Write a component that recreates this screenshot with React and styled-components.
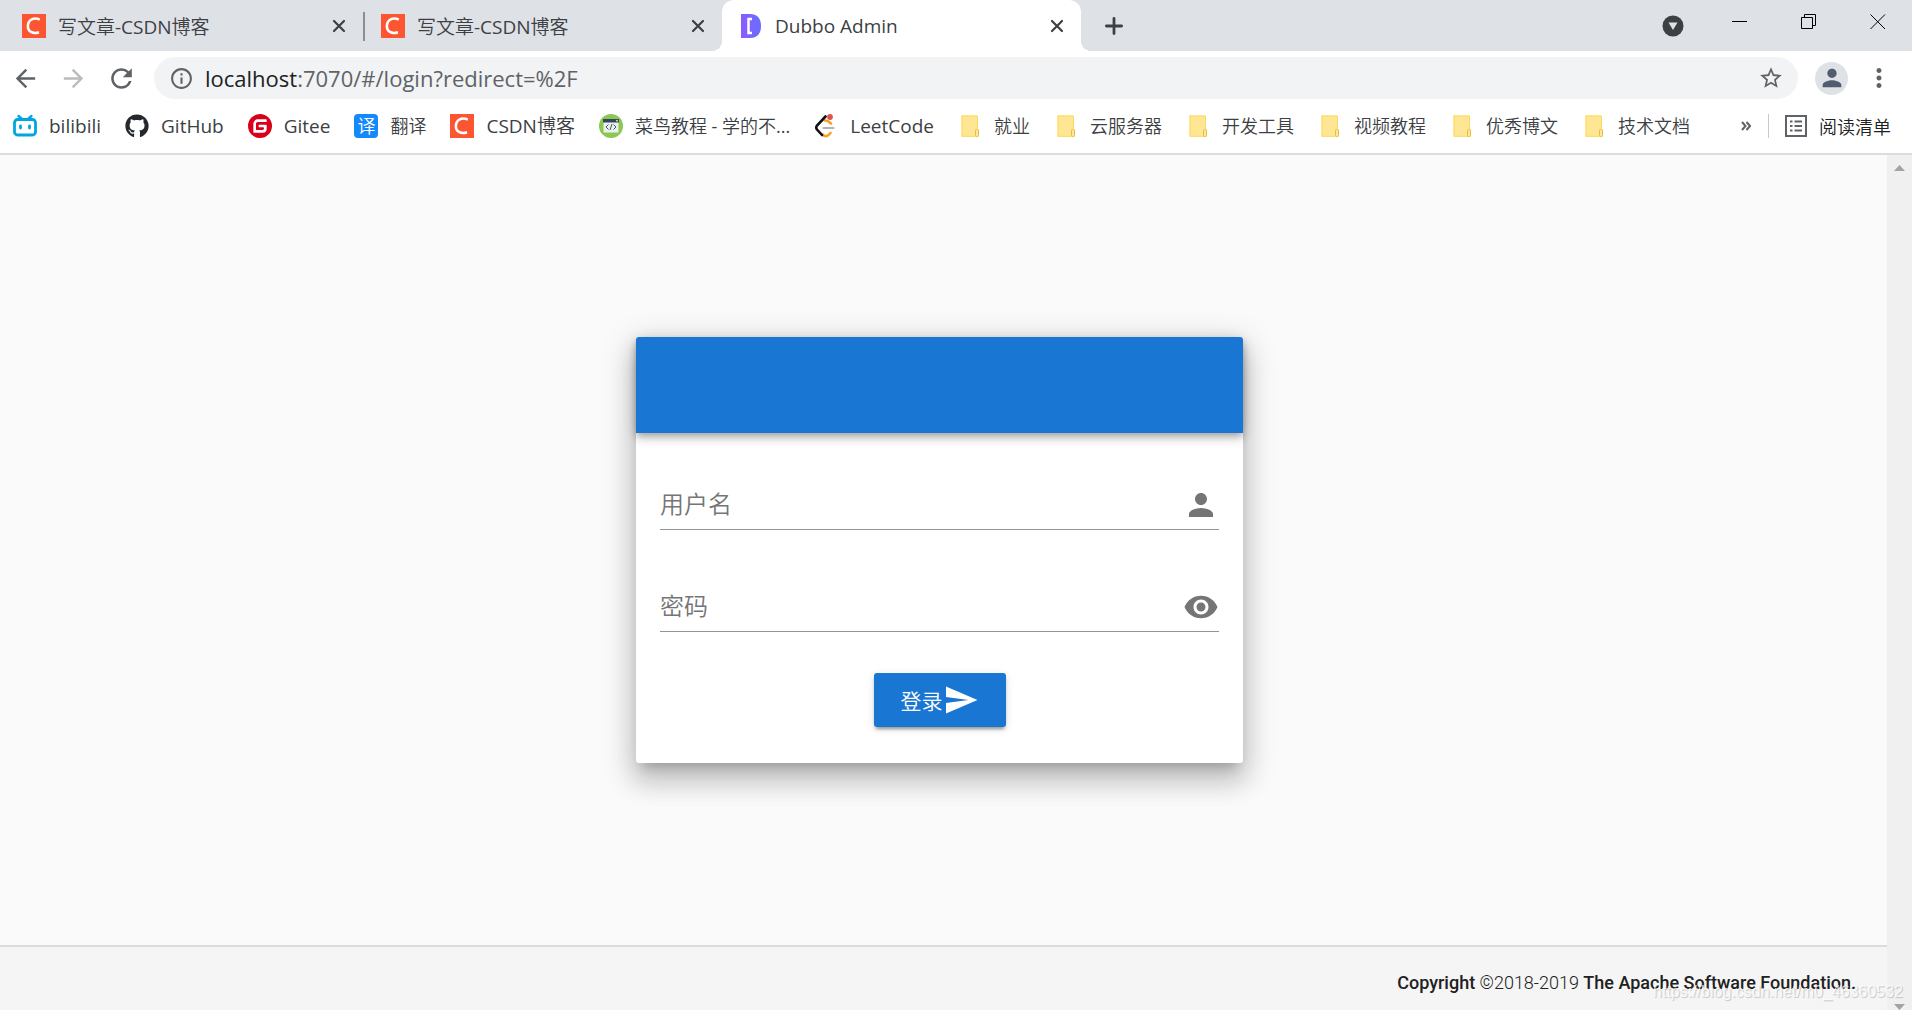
import React, { useState } from 'react';
import styled, { createGlobalStyle, css } from 'styled-components';
import {
  MdArrowBack,
  MdArrowForward,
  MdRefresh,
  MdInfoOutline,
  MdStarBorder,
  MdPerson,
  MdMoreVert,
  MdRemoveRedEye,
  MdSend,
} from 'react-icons/md';
import { FaGithub } from 'react-icons/fa';
import { SiGitee } from 'react-icons/si';

const CsdnIcon = () => (
  <svg width="24" height="24" viewBox="0 0 24 24" aria-hidden="true">
    <rect width="24" height="24" fill="#fc5531" />
    <path
      d="M17.8 5.6C12 3 6.2 5.6 5.9 11.6C5.6 17.6 10.6 20.4 17 18.2"
      fill="none"
      stroke="#fff"
      strokeWidth="2.6"
    />
  </svg>
);

const DubboIcon = () => (
  <svg width="20" height="24" viewBox="0 0 20 24" aria-hidden="true">
    <defs>
      <linearGradient id="dubbo" x1="0" y1="0" x2="1" y2="0">
        <stop offset="0" stopColor="#8a5cff" />
        <stop offset="1" stopColor="#6a6cff" />
      </linearGradient>
    </defs>
    <path d="M0 0H9C16 0 20 4 20 12S16 24 9 24H0Z" fill="url(#dubbo)" />
    <path d="M11 5H7.5V19H11" fill="none" stroke="#fff" strokeWidth="2.5" />
  </svg>
);

const BilibiliIcon = () => (
  <svg width="24" height="24" viewBox="0 0 24 24" aria-hidden="true">
    <g fill="none" stroke="#00a7de" strokeWidth="2.8" strokeLinecap="round">
      <rect x="1.5" y="5.5" width="21" height="15.5" rx="3" />
      <path d="M5.5 2L9 5M18.5 2L15 5" strokeWidth="2.4" />
      <path d="M7.5 12V14M16.5 12V14" />
    </g>
  </svg>
);

const RunoobIcon = () => (
  <svg width="24" height="24" viewBox="0 0 24 24" aria-hidden="true">
    <circle cx="12" cy="12" r="12" fill="#8cc751" />
    <rect x="4.5" y="5" width="15" height="13.5" fill="#eceff0" />
    <rect x="4" y="5" width="16" height="3.5" fill="#32485a" />
    <circle cx="18" cy="6.7" r="0.9" fill="#e8e8e8" />
    <path
      d="M9.5 10.5L7 13L9.5 15.5M14.5 10.5L17 13L14.5 15.5M13 10L11 16"
      fill="none"
      stroke="#40586b"
      strokeWidth="1"
    />
  </svg>
);

const LeetCodeIcon = () => (
  <svg width="24" height="24" viewBox="0 0 24 24" aria-hidden="true">
    <g fill="none" strokeWidth="2.6" strokeLinecap="round">
      <path d="M11 6.5Q14 6.4 17 9.5" stroke="#f8a126" />
      <path d="M8.5 20.5Q12.5 24.5 16.5 19" stroke="#f8a126" />
      <path d="M11.5 2.5L3 11.5Q1.5 13.5 3 15.5L8 21" stroke="#111" />
      <path d="M9.5 14H19.5" stroke="#b4b4b4" strokeWidth="2.2" />
    </g>
    <circle cx="16" cy="3" r="2.9" fill="#d9534f" />
  </svg>
);

const FolderIcon = () => (
  <svg width="24" height="24" viewBox="0 0 24 24" aria-hidden="true">
    <path d="M3.5 1.5H19.5V15.5H21V22.5H3.5Z" fill="#ffe694" />
    <path d="M3.5 2H19.5V15M4 1.5V22M3.5 22.3H19" fill="none" stroke="#fadb5e" />
    <rect x="17.5" y="15.5" width="3" height="7" rx="1" fill="#ffe694" stroke="#e8bd3f" />
  </svg>
);

const ListIcon = () => (
  <svg width="22" height="22" viewBox="0 0 22 22" aria-hidden="true">
    <rect x="1" y="1" width="20" height="20" fill="none" stroke="#5f6368" strokeWidth="2" />
    <path
      d="M5 6.5H7.5M5 11H7.5M5 15.5H7.5M9.5 6.5H17M9.5 11H17M9.5 15.5H17"
      stroke="#5f6368"
      strokeWidth="2"
    />
  </svg>
);

const CloseIcon = () => (
  <svg width="14" height="14" viewBox="0 0 14 14" aria-hidden="true">
    <path d="M2 2L12 12M12 2L2 12" stroke="#3c4043" strokeWidth="2.2" strokeLinecap="round" />
  </svg>
);

const TranslateIcon = styled.span`
  display: block;
  flex-shrink: 0;
  width: 24px;
  height: 24px;
  border-radius: 4px;
  background: #1389fd;
  color: #fff;
  font-size: 18px;
  line-height: 24px;
  text-align: center;
`;

const tabs = [
  { id: 1, title: '写文章-CSDN博客', icon: <CsdnIcon /> },
  { id: 2, title: '写文章-CSDN博客', icon: <CsdnIcon /> },
  { id: 3, title: 'Dubbo Admin', icon: <DubboIcon />, active: true },
];

const bookmarks = [
  { title: 'bilibili', icon: <BilibiliIcon />, latin: true },
  { title: 'GitHub', icon: <FaGithub size={24} color="#24292f" />, latin: true },
  { title: 'Gitee', icon: <SiGitee size={24} color="#d9001b" />, latin: true },
  { title: '翻译', icon: <TranslateIcon>译</TranslateIcon> },
  { title: 'CSDN博客', icon: <CsdnIcon />, latin: true },
  { title: '菜鸟教程 - 学的不...', icon: <RunoobIcon /> },
  { title: 'LeetCode', icon: <LeetCodeIcon />, latin: true },
  { title: '就业', icon: <FolderIcon /> },
  { title: '云服务器', icon: <FolderIcon /> },
  { title: '开发工具', icon: <FolderIcon /> },
  { title: '视频教程', icon: <FolderIcon /> },
  { title: '优秀博文', icon: <FolderIcon /> },
  { title: '技术文档', icon: <FolderIcon /> },
];

const App = () => {
  const [user, setUser] = useState('');
  const [password, setPassword] = useState('');
  const [visible, setVisible] = useState(false);

  return (
    <Screen>
      <GlobalStyle />
      <TabStrip>
        {tabs.map((tab) => (
          <Tab key={tab.id} $active={tab.active} $divider={tab.id === 1}>
            {tab.icon}
            <TabTitle>{tab.title}</TabTitle>
            <TabButton type="button" aria-label="关闭标签页">
              <CloseIcon />
            </TabButton>
          </Tab>
        ))}
        <NewTab type="button" aria-label="新标签页">
          <svg width="18" height="18" viewBox="0 0 18 18" aria-hidden="true">
            <path d="M9 1.4V16.6M1.4 9H16.6" stroke="#3c4043" strokeWidth="2.8" strokeLinecap="round" />
          </svg>
        </NewTab>
        <TabSearch type="button" aria-label="搜索标签页">
          <svg width="22" height="22" viewBox="0 0 22 22" aria-hidden="true">
            <circle cx="11" cy="11" r="10.5" fill="#3c4043" />
            <path d="M6.5 7.5H15.5L11 15Z" fill="#dee1e6" />
          </svg>
        </TabSearch>
        <WindowButtons>
          <WindowButton type="button" aria-label="最小化">
            <svg width="16" height="16" viewBox="0 0 16 16" aria-hidden="true">
              <path d="M0 7.5H15" stroke="#000" />
            </svg>
          </WindowButton>
          <WindowButton type="button" aria-label="还原">
            <svg width="16" height="16" viewBox="0 0 16 16" aria-hidden="true">
              <path d="M0.5 3.5H11.5V14.5H0.5ZM3.5 3V0.5H14.5V11.5H12" fill="none" stroke="#000" />
            </svg>
          </WindowButton>
          <WindowButton type="button" aria-label="关闭">
            <svg width="16" height="16" viewBox="0 0 16 16" aria-hidden="true">
              <path d="M0.5 0.5L15 15M15 0.5L0.5 15" stroke="#000" />
            </svg>
          </WindowButton>
        </WindowButtons>
      </TabStrip>

      <Toolbar>
        <NavButton type="button" aria-label="后退">
          <MdArrowBack size={29} />
        </NavButton>
        <NavButton type="button" aria-label="前进" disabled>
          <MdArrowForward size={29} />
        </NavButton>
        <NavButton type="button" aria-label="重新加载">
          <MdRefresh size={31} />
        </NavButton>
        <AddressBar>
          <MdInfoOutline size={25} />
          <Url href="#/login?redirect=%2F">
            <Host>localhost</Host>:7070/#/login?redirect=%2F
          </Url>
          <BarButton type="button" aria-label="为此标签页添加书签">
            <MdStarBorder size={26} />
          </BarButton>
        </AddressBar>
        <Avatar type="button" aria-label="个人资料">
          <MdPerson size={28} />
        </Avatar>
        <BarButton type="button" aria-label="自定义及控制">
          <MdMoreVert size={30} />
        </BarButton>
      </Toolbar>

      <BookmarkBar>
        <Bookmarks>
          {bookmarks.map((item) => (
            <Bookmark key={item.title} href="#" $latin={item.latin}>
              {item.icon}
              <span>{item.title}</span>
            </Bookmark>
          ))}
        </Bookmarks>
        <More type="button" aria-label="更多书签">
          <svg width="10" height="10" viewBox="0 0 10 10" aria-hidden="true">
            <path d="M1 1L4.5 5L1 9M5.5 1L9 5L5.5 9" fill="none" stroke="#5f6368" strokeWidth="2" />
          </svg>
        </More>
        <ReadingList type="button">
          <ListIcon />
          阅读清单
        </ReadingList>
      </BookmarkBar>

      <Viewport>
        <Page>
          <Main>
            <Card>
              <CardHead />
              <Form onSubmit={(e) => e.preventDefault()}>
                <Field>
                  <Input
                    id="user"
                    type="text"
                    placeholder="用户名"
                    aria-label="用户名"
                    value={user}
                    onChange={(e) => setUser(e.target.value)}
                  />
                  <MdPerson size={36} />
                </Field>
                <Field>
                  <Input
                    id="password"
                    type={visible ? 'text' : 'password'}
                    placeholder="密码"
                    aria-label="密码"
                    value={password}
                    onChange={(e) => setPassword(e.target.value)}
                  />
                  <EyeButton type="button" aria-label="显示密码" onClick={() => setVisible(!visible)}>
                    <MdRemoveRedEye size={36} />
                  </EyeButton>
                </Field>
                <Submit type="submit">
                  登录
                  <MdSend size={36} />
                </Submit>
              </Form>
            </Card>
          </Main>
          <Footer>
            <span>
              <b>Copyright</b> ©2018-2019 <b>The Apache Software Foundation.</b>
            </span>
          </Footer>
        </Page>
        <ScrollBar>
          <svg width="11" height="6" viewBox="0 0 11 6" aria-hidden="true">
            <path d="M0 6L5.5 0L11 6Z" fill="#a3a3a3" />
          </svg>
          <svg width="11" height="6" viewBox="0 0 11 6" aria-hidden="true">
            <path d="M0 0L5.5 6L11 0Z" fill="#a3a3a3" />
          </svg>
        </ScrollBar>
        <Watermark>https://blog.csdn.net/m0_46360532</Watermark>
      </Viewport>
    </Screen>
  );
};

export default App;

const GlobalStyle = createGlobalStyle`
  * {
    box-sizing: border-box;
  }
  body {
    margin: 0;
    font-family: 'Open Sans', 'Noto Sans CJK SC DemiLight', 'Noto Sans CJK SC', sans-serif;
    font-size: 18px;
    color: #3c4043;
  }
  svg {
    display: block;
    flex-shrink: 0;
  }
`;

const plainButton = css`
  display: flex;
  align-items: center;
  justify-content: center;
  flex-shrink: 0;
  padding: 0;
  border: 0;
  background: none;
  color: #5f6368;
  font: inherit;
`;

const Screen = styled.div`
  display: flex;
  flex-direction: column;
  height: 100vh;
  overflow: hidden;
  background: #fff;
`;

const TabStrip = styled.header`
  display: flex;
  flex-shrink: 0;
  height: 51px;
  padding-left: 4px;
  background: #dee1e6;
`;

const Tab = styled.div`
  position: relative;
  display: flex;
  align-items: center;
  gap: ${(props) => (props.$active ? 14 : 12)}px;
  flex: 0 1 359px;
  min-width: 0;
  padding: 0 12px 0 ${(props) => (props.$active ? 19 : 18)}px;

  ${(props) =>
    props.$divider &&
    css`
      &::after {
        content: '';
        position: absolute;
        top: 12px;
        right: -2px;
        width: 2px;
        height: 29px;
        background: #8b8f94;
      }
    `}

  ${(props) =>
    props.$active &&
    css`
      background: #fff;
      border-radius: 12px 12px 0 0;

      &::before,
      &::after {
        content: '';
        position: absolute;
        bottom: 0;
        width: 10px;
        height: 10px;
      }
      &::before {
        left: -10px;
        background: radial-gradient(circle at 0 0, #dee1e6 10px, #fff 10px);
      }
      &::after {
        right: -10px;
        background: radial-gradient(circle at 100% 0, #dee1e6 10px, #fff 10px);
      }
    `}
`;

const TabTitle = styled.span`
  flex: 1;
  min-width: 0;
  overflow: hidden;
  white-space: nowrap;
  font-size: 19px;
`;

const TabButton = styled.button`
  ${plainButton}
  width: 24px;
  height: 24px;
`;

const NewTab = styled.button`
  ${plainButton}
  width: 36px;
  margin-left: 15px;
`;

const TabSearch = styled.button`
  ${plainButton}
  width: 32px;
  margin-left: auto;
`;

const WindowButtons = styled.div`
  display: flex;
  height: 43px;
  margin-left: 16px;
`;

const WindowButton = styled.button`
  ${plainButton}
  width: 69px;
`;

const Toolbar = styled.nav`
  display: flex;
  align-items: center;
  flex-shrink: 0;
  height: 54px;
  padding: 0 9px 0 1px;
`;

const NavButton = styled.button`
  ${plainButton}
  width: 48px;
  height: 42px;

  &:disabled {
    color: #babcbe;
  }
`;

const BarButton = styled.button`
  ${plainButton}
  width: 48px;
  height: 42px;
`;

const AddressBar = styled.div`
  display: flex;
  align-items: center;
  flex: 1;
  height: 42px;
  margin: 0 17px 0 9px;
  padding: 0 3px 0 15px;
  border-radius: 21px;
  background: #f1f3f4;
  color: #5f6368;
`;

const Url = styled.a`
  flex: 1;
  margin-left: 11px;
  color: #5f6368;
  font-size: 22px;
  line-height: 28px;
  text-decoration: none;
`;

const Host = styled.span`
  color: #202124;
`;

const Avatar = styled.button`
  ${plainButton}
  width: 33px;
  height: 33px;
  margin-right: 7px;
  border-radius: 50%;
  background: #dee1e6;
  color: #525c70;
`;

const BookmarkBar = styled.nav`
  display: flex;
  align-items: center;
  flex-shrink: 0;
  height: 50px;
  padding: 0 21px 6px 13px;
  border-bottom: 2px solid #dadce0;
`;

const Bookmarks = styled.div`
  display: flex;
  gap: 24px;
  flex: 1;
  min-width: 0;
`;

const Bookmark = styled.a`
  display: flex;
  align-items: center;
  gap: 12px;
  color: #3c4043;
  font-size: ${(props) => (props.$latin ? 19 : 18)}px;
  line-height: 26px;
  text-decoration: none;
  white-space: nowrap;
`;

const More = styled.button`
  ${plainButton}
  width: 24px;
  height: 24px;
  margin-right: 10px;
`;

const ReadingList = styled.button`
  ${plainButton}
  gap: 12px;
  height: 24px;
  padding-left: 16px;
  border-left: 1px solid #c6c9cd;
  color: #202124;
  white-space: nowrap;
`;

const Viewport = styled.div`
  position: relative;
  display: flex;
  flex: 1;
  min-height: 0;
`;

const Page = styled.div`
  display: flex;
  flex-direction: column;
  flex: 1;
  background: #fafafa;
  font-family: Roboto, 'Noto Sans CJK SC', sans-serif;
`;

const Main = styled.main`
  display: flex;
  align-items: center;
  justify-content: center;
  flex: 1;
  padding-right: 8px;
`;

const Card = styled.section`
  width: 100%;
  max-width: 607px;
  border-radius: 3px;
  background: #fff;
  box-shadow: 0 10px 12px -6px rgba(0, 0, 0, 0.2), 0 18px 26px 3px rgba(0, 0, 0, 0.14),
    0 8px 33px 6px rgba(0, 0, 0, 0.12);
`;

const CardHead = styled.div`
  height: 96px;
  border-radius: 3px 3px 0 0;
  background: #1976d2;
  box-shadow: 0 3px 6px -1px rgba(0, 0, 0, 0.2), 0 6px 8px 0 rgba(0, 0, 0, 0.14),
    0 2px 15px 0 rgba(0, 0, 0, 0.12);
`;

const Form = styled.form`
  display: flex;
  flex-direction: column;
  align-items: center;
  padding: 48px 24px 36px;
`;

const Field = styled.div`
  display: flex;
  align-items: center;
  width: 100%;
  height: 49px;
  margin-bottom: 53px;
  border-bottom: 1px solid #949494;
  color: #757575;

  & + & {
    margin-bottom: 41px;
  }
`;

const Input = styled.input`
  flex: 1;
  min-width: 0;
  height: 48px;
  padding: 0;
  border: 0;
  outline: 0;
  background: none;
  color: rgba(0, 0, 0, 0.87);
  font: inherit;
  font-size: 24px;
  font-weight: 350;

  &::placeholder {
    color: #757575;
  }
`;

const EyeButton = styled.button`
  ${plainButton}
  color: inherit;
`;

const Submit = styled.button`
  ${plainButton}
  min-width: 132px;
  height: 54px;
  border-radius: 3px;
  background: #1976d2;
  color: #fff;
  font-size: 21px;
  font-weight: 350;
  box-shadow: 0 5px 2px -3px rgba(0, 0, 0, 0.2), 0 3px 3px 0 rgba(0, 0, 0, 0.14),
    0 2px 8px 0 rgba(0, 0, 0, 0.12);
`;

const Footer = styled.footer`
  display: flex;
  justify-content: flex-end;
  flex-shrink: 0;
  height: 65px;
  padding: 25px 31px 0;
  border-top: 2px solid #dcdcdc;
  background: #f5f5f5;
  color: #212121;
  font-size: 18px;
  font-weight: 300;

  b {
    font-weight: 500;
  }
`;

const ScrollBar = styled.div`
  display: flex;
  flex-direction: column;
  align-items: center;
  justify-content: space-between;
  width: 25px;
  padding-top: 10px;
  background: #f0f0f0;
`;

const Watermark = styled.span`
  position: absolute;
  right: 9px;
  bottom: 9px;
  color: rgba(255, 255, 255, 0.8);
  font-family: 'Liberation Sans', sans-serif;
  font-size: 16px;
  text-shadow: 1px 1px 1px rgba(0, 0, 0, 0.2);
`;
